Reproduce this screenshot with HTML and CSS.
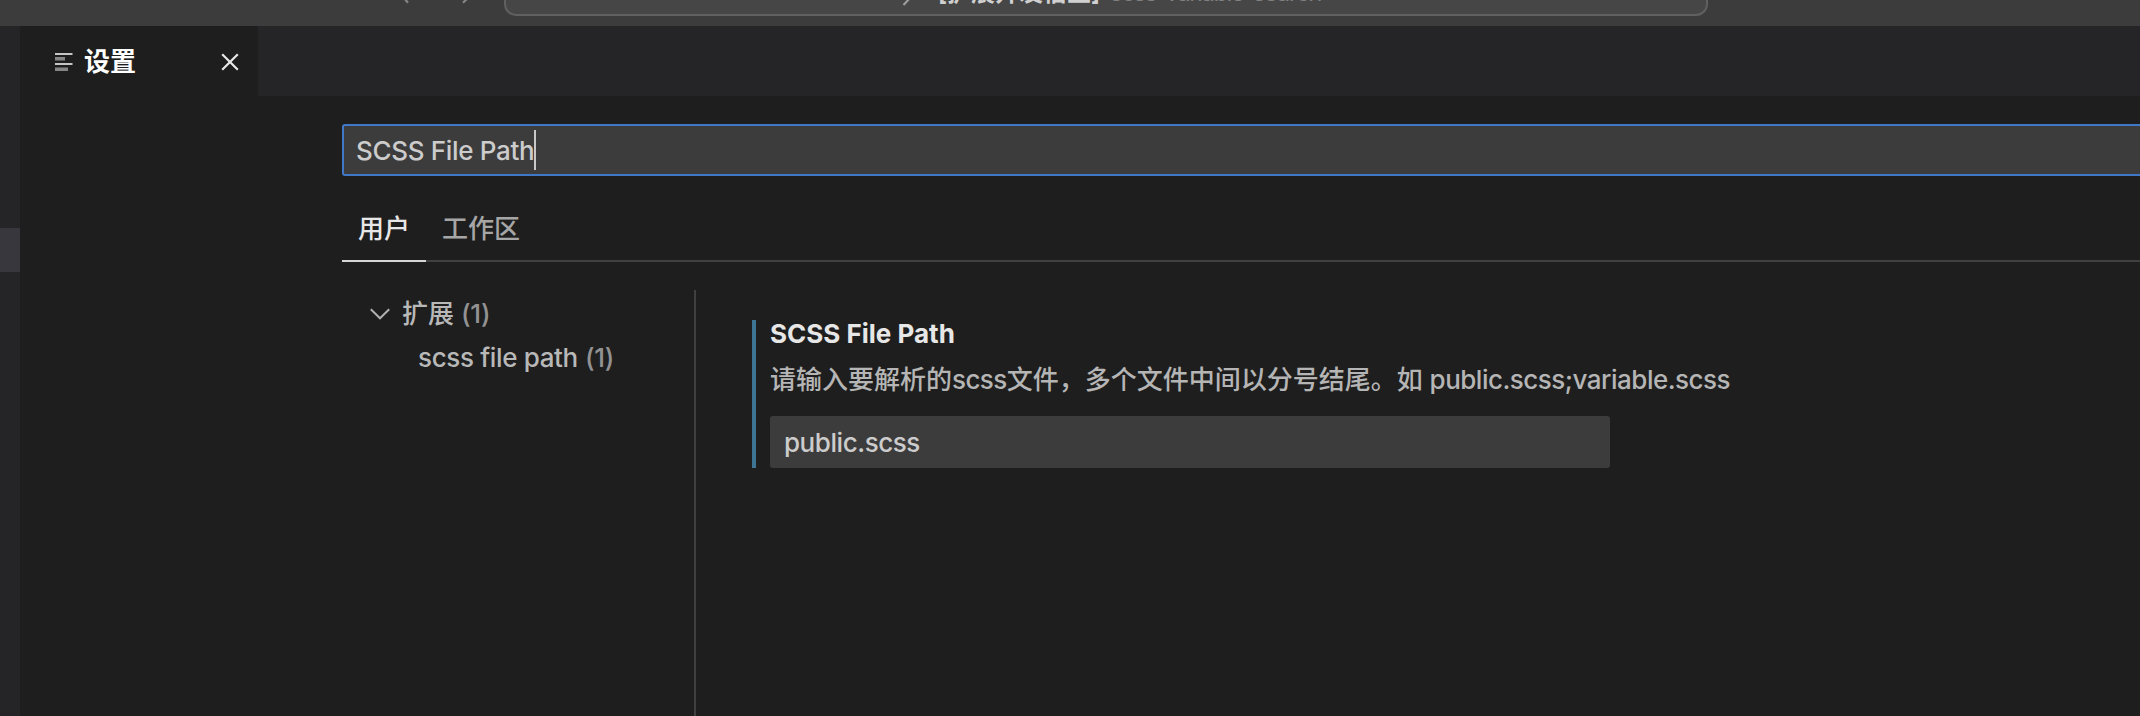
FILE: index.html
```html
<!DOCTYPE html>
<html lang="zh-CN">
<head>
<meta charset="utf-8">
<title>设置</title>
<link rel="stylesheet" href="styles.css">
</head>
<body>
<header class="titlebar">
  <svg class="nav" viewBox="0 0 90 26"><path d="M9 -8L18 2.8M84 -8L73 2.8"/></svg>
  <div class="command">
    <svg class="search" viewBox="0 0 16 26"><path d="M11 -3L3.5 5"/></svg>
    <span class="host">[扩展开发宿主]</span>
    <span class="project">scss-variable-search</span>
  </div>
</header>
<div class="workbench">
  <aside class="sidebar"><div class="row-selected"></div></aside>
  <main class="editor">
    <div class="tabs">
      <div class="tab">
        <svg class="tab-icon" viewBox="0 0 18 22"><path class="bright" d="M0 3H17.5M0 13H17.5"/><path class="dim" d="M0 7.8H10M0 18.2H13"/></svg>
        <span class="tab-label">设置</span>
        <svg class="close" viewBox="0 0 18 18"><path d="M1.2 1.2L16.8 16.8M16.8 1.2L1.2 16.8"/></svg>
      </div>
    </div>
    <div class="settings">
      <div class="search-box"><span class="query">SCSS File Path</span><span class="caret"></span></div>
      <nav class="scopes"><span class="scope active">用户</span><span class="scope">工作区</span></nav>
      <div class="body">
        <div class="toc">
          <div class="toc-row">
            <svg class="chevron" viewBox="0 0 20 12"><path d="M.8 1.2L10 10.3L19.2 1.2"/></svg>
            <span class="toc-name">扩展</span><span class="count">(1)</span>
          </div>
          <div class="toc-row child"><span class="toc-name latin">scss file path</span><span class="count">(1)</span></div>
        </div>
        <div class="content">
          <section class="setting">
            <h2 class="setting-title">SCSS File Path</h2>
            <p class="description">请输入要解析的<span class="scss">scss</span>文件，多个文件中间以分号结尾。如 <span class="files">public.scss;variable.scss</span></p>
            <div class="value"><span class="value-text">public.scss</span></div>
          </section>
        </div>
      </div>
    </div>
  </main>
</div>
</body>
</html>
```
FILE: styles.css
```css
* { box-sizing: border-box; }
body {
  margin: 0; width: 2140px; height: 716px; overflow: hidden;
  display: flex; flex-direction: column;
  background: #1e1e1e; color: #cccccc;
  font: 26px/36px Inter, "Noto Sans CJK SC", sans-serif;
}
svg { display: block; fill: none; flex: none; }
.titlebar { height: 26px; flex: none; display: flex; background: #3c3c3c; padding-left: 390px; overflow: hidden; }
.nav { width: 90px; height: 26px; stroke: #858585; stroke-width: 2.2; }
.command {
  margin-left: 24px; width: 1204px; height: 48px; margin-top: -32px; flex: none;
  border: 2px solid #606060; border-radius: 12px; background: #464646;
  display: flex; padding-left: 394px;
  font-size: 24px; line-height: 36px; white-space: nowrap;
}
.search { width: 16px; height: 26px; margin-top: 30px; stroke: #a0a0a0; stroke-width: 2; }
.host { margin: 5px 0 0 22px; font-weight: 700; color: #d0d0d0; }
.project { margin: 5px 0 0 10px; letter-spacing: -1.5px; color: #808080; }
.workbench { flex: 1; display: flex; min-height: 0; }
.sidebar { width: 20px; flex: none; background: #252528; padding-top: 202px; }
.row-selected { height: 44px; background: #37373d; }
.editor { flex: 1; min-width: 0; display: flex; flex-direction: column; }
.tabs { height: 70px; flex: none; background: #252528; display: flex; }
.tab { width: 238px; display: flex; align-items: center; background: #1e1e1e; padding-left: 35px; }
.tab-icon { width: 18px; height: 22px; margin-top: 1px; stroke-width: 2; }
.bright { stroke: #c5c5c5; }
.dim { stroke: #858585; stroke-width: 3.4; }
.tab-label { margin-left: 11px; padding-top: 1px; width: 137px; color: #fff; font-weight: 700; font-size: 26px; }
.close { width: 18px; height: 18px; margin-top: 2px; stroke: #e8e8e8; stroke-width: 2.2; }
.settings { flex: 1; padding: 28px 0 0 322px; display: flex; flex-direction: column; min-height: 0; }
.search-box {
  height: 52px; width: 1820px; flex: none; display: flex; align-items: center;
  border: 2px solid #4078c8; border-radius: 3px; background: #3c3c3c; padding-left: 12px;
}
.query { width: 178px; padding-top: 2px; white-space: nowrap; font-weight: 500; letter-spacing: -.33px; }
.caret { width: 2px; height: 40px; background: #c8c8c8; }
.scopes { margin-top: 24px; height: 62px; flex: none; display: flex; border-bottom: 2px solid #404040; }
.scope { height: 62px; padding: 11px 16px 0; color: #a6a6a6; font-weight: 500; }
.scope.active { color: #e7e7e7; border-bottom: 2px solid #d7d7d7; width: 84px; }
.body { flex: 1; display: flex; margin-top: 28px; }
.toc { width: 352px; flex: none; padding: 2px 0 0 28px; }
.toc-row { height: 44px; display: flex; align-items: center; color: #a8a8a8; font-weight: 500; }
.chevron { width: 20px; height: 12px; margin-right: 12px; stroke: #b0b0b0; stroke-width: 2; }
.toc-name { color: #b8b8b8; }
.toc-name.latin { letter-spacing: -.35px; }
.count { margin-left: 7px; color: #929292; font-weight: 500; letter-spacing: -.3px; }
.child { padding-left: 48px; }
.content { flex: 1; border-left: 2px solid #404040; padding: 30px 0 0 56px; }
.setting { border-left: 4px solid #3d7695; height: 148px; width: 1000px; padding-left: 14px; }
.setting-title { margin: 0; height: 42px; line-height: 27px; font-size: 26px; font-weight: 700; color: #e7e7e7; }
.description { margin: 0; height: 54px; white-space: nowrap; color: #b5b5b5; font-weight: 500; }
.scss { letter-spacing: -.6px; }
.files { letter-spacing: -.5px; }
.value { width: 840px; height: 52px; border-radius: 3px; background: #3c3c3c; padding: 2px 0 0 14px; display: flex; align-items: center; }
.value-text { font-weight: 500; letter-spacing: -.45px; }
```
